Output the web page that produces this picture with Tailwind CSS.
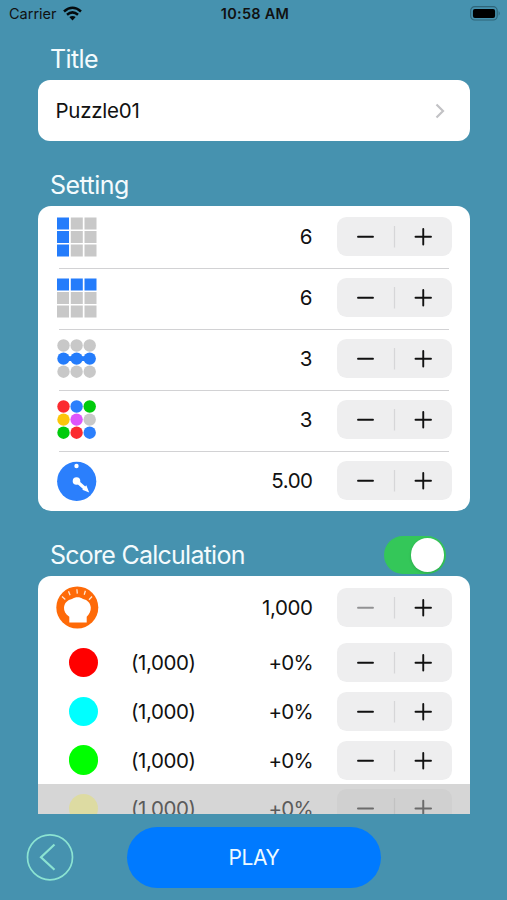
<!DOCTYPE html>
<html lang="en">
<head>
<meta charset="utf-8">
<title>Puzzle settings</title>
<script src="https://cdn.jsdelivr.net/npm/@tailwindcss/browser@4"></script>
</head>
<body class="bg-[#4692af]">
<svg class="hidden">
  <symbol id="stepper" viewBox="0 0 115 39">
    <rect width="115" height="39" rx="9.5" fill="#eeeeef"/>
    <path d="M57.5 9v21.5" stroke="#d6d6d8" stroke-width="1.2"/>
    <path d="M78.5 19.7h15.500M86.250 11.9v15.600" stroke="#111" stroke-width="1.9" stroke-linecap="round"/>
    <path d="M21 19.7h15" stroke="currentColor" stroke-width="1.9" stroke-linecap="round"/>
  </symbol>
</svg>
<div class="w-[507px] h-[900px] overflow-hidden flex flex-col bg-[#4692af] text-[#111] font-['Inter',sans-serif]">
  <header class="h-7 shrink-0 grid grid-cols-3 items-center pl-[9px] pr-[6px]">
    <div class="flex items-center gap-[6px]">
      <span class="text-[14.5px] leading-none tracking-[0px]">Carrier</span>
      <svg class="w-[19px] h-[15px] -mt-[2px]" viewBox="0 0 19 15" fill="none" stroke="#050b0d" stroke-width="2.5"><path d="M1 5.500Q9.500-2 18 5.500M4 8.800Q9.500 4 15 8.800"/><path d="M6.300 11.100Q9.500 8.700 12.700 11.100L9.500 14.500Z" fill="#050b0d" stroke="none"/></svg>
    </div>
    <div class="text-center text-[14.5px] leading-none font-semibold tracking-[0.25px] whitespace-nowrap">10:58 AM</div>
    <svg class="justify-self-end w-[31px] h-[15px] -mt-[2px]" viewBox="0 0 31 15"><rect x=".7" y=".7" width="26.5" height="13.3" rx="4" fill="none" stroke="#2f6579" stroke-width="1.2"/><rect x="2.900" y="2.900" width="22.2" height="9" rx="2" fill="#000"/><path d="M28.700 5v4.800q2-2.400 0-4.800" fill="#2f6579"/></svg>
  </header>
  <main class="h-[786px] shrink-0 mx-[37.5px] flex flex-col overflow-hidden">
    <h2 class="h-[52px] shrink-0 pl-[12.5px] pt-[16px] text-[25px] leading-[31px] tracking-[-0.6px] text-[#f4fbfd]">Title</h2>
    <section class="h-[61px] shrink-0 rounded-[12px] bg-white flex items-center justify-between pl-[18px] pr-[24px]">
      <span class="pt-[2px] text-[20.5px] tracking-[-0.25px]">Puzzle01</span>
      <svg class="w-[12px] h-[16px]" viewBox="0 0 12 16" fill="none" stroke="#c2c2c5" stroke-width="2.2"><path d="M2.500 1.500l6.500 6.500-6.500 6.500"/></svg>
    </section>
    <h2 class="h-[65px] shrink-0 pl-[12.5px] pt-[29px] text-[25px] leading-[31px] tracking-[-0.55px] text-[#f4fbfd]">Setting</h2>
    <section class="shrink-0 rounded-[13px] bg-white text-[20.5px]">
      <div class="h-[61px] relative flex items-center pl-[19.5px] pr-[18px]">
        <svg class="w-[40px] h-[40px]" viewBox="0 0 40 40"><path fill="#247cfb" d="M0 .5h12v12H0zM0 14h12v12H0zM0 27.500h12v12H0z"/><path fill="#c8c8c8" d="M13.800.5h12v12h-12zM27.500.5h12v12h-12zM13.800 14h12v12h-12zM27.500 14h12v12h-12zM13.800 27.500h12v12h-12zM27.500 27.500h12v12h-12z"/></svg>
        <span class="ml-auto mr-[24px] pt-[2px]">6</span>
        <svg class="w-[115px] h-[39px]"><use href="#stepper"/></svg>
        <i class="absolute left-[21px] right-[21px] bottom-[-2px] h-[1.5px] bg-[#d2d2d4]"></i>
      </div>
      <div class="h-[61px] relative flex items-center pl-[19.5px] pr-[18px]">
        <svg class="w-[40px] h-[40px]" viewBox="0 0 40 40"><path fill="#247cfb" d="M0 .5h12v12H0zM13.800.5h12v12h-12zM27.500.5h12v12h-12z"/><path fill="#c8c8c8" d="M0 14h12v12H0zM0 27.500h12v12H0zM13.800 14h12v12h-12zM27.500 14h12v12h-12zM13.800 27.500h12v12h-12zM27.500 27.500h12v12h-12z"/></svg>
        <span class="ml-auto mr-[24px] pt-[2px]">6</span>
        <svg class="w-[115px] h-[39px]"><use href="#stepper"/></svg>
        <i class="absolute left-[21px] right-[21px] bottom-[-2px] h-[1.5px] bg-[#d2d2d4]"></i>
      </div>
      <div class="h-[61px] relative flex items-center pl-[19.5px] pr-[18px]">
        <svg class="w-[40px] h-[40px]" viewBox="0 0 40 40"><g fill="#c8c8c8"><circle cx="6.500" cy="6.500" r="6.200"/><circle cx="19.600" cy="6.500" r="6.200"/><circle cx="32.700" cy="6.500" r="6.200"/><circle cx="6.500" cy="32.700" r="6.200"/><circle cx="19.600" cy="32.700" r="6.200"/><circle cx="32.700" cy="32.700" r="6.200"/></g><g fill="#247cfb"><circle cx="6.500" cy="19.600" r="6.200"/><circle cx="19.600" cy="19.600" r="6.200"/><circle cx="32.700" cy="19.600" r="6.200"/><path d="M6 17.200h27v4.800H6z"/></g></svg>
        <span class="ml-auto mr-[24px] pt-[2px]">3</span>
        <svg class="w-[115px] h-[39px]"><use href="#stepper"/></svg>
        <i class="absolute left-[21px] right-[21px] bottom-[-2px] h-[1.5px] bg-[#d2d2d4]"></i>
      </div>
      <div class="h-[61px] relative flex items-center pl-[19.5px] pr-[18px]">
        <svg class="w-[40px] h-[40px]" viewBox="0 0 40 40"><circle cx="6.500" cy="6.500" r="6.200" fill="#fb2b2f"/><circle cx="19.600" cy="6.500" r="6.200" fill="#2b7ffc"/><circle cx="32.700" cy="6.500" r="6.200" fill="#00cb0c"/><circle cx="6.500" cy="19.600" r="6.200" fill="#fdc60a"/><circle cx="19.600" cy="19.600" r="6.200" fill="#dd55fb"/><circle cx="32.700" cy="19.600" r="6.200" fill="#c8c8c8"/><circle cx="6.500" cy="32.700" r="6.200" fill="#00cb0c"/><circle cx="19.600" cy="32.700" r="6.200" fill="#fb2b2f"/><circle cx="32.700" cy="32.700" r="6.200" fill="#2b7ffc"/></svg>
        <span class="ml-auto mr-[24px] pt-[2px]">3</span>
        <svg class="w-[115px] h-[39px]"><use href="#stepper"/></svg>
        <i class="absolute left-[21px] right-[21px] bottom-[-2px] h-[1.5px] bg-[#d2d2d4]"></i>
      </div>
      <div class="h-[61px] relative flex items-center pl-[19.5px] pr-[18px]">
        <svg class="w-[40px] h-[40px]" viewBox="0 0 40 40"><circle cx="19.700" cy="20.300" r="19.600" fill="#2b7ffc"/><circle cx="19.500" cy="5" r="2.200" fill="#fff"/><circle cx="19.500" cy="20" r="3.800" fill="#fff"/><path d="M19.500 20l8.500 7.500" stroke="#fff" stroke-width="3.400"/><path d="M25.300 28.700l4-4.500 2.900 7.300z" fill="#fff"/></svg>
        <span class="ml-auto mr-[24px] pt-[2px] tracking-[-0.5px]">5.00</span>
        <svg class="w-[115px] h-[39px]"><use href="#stepper"/></svg>
      </div>
    </section>
    <div class="h-[65px] shrink-0 flex items-start justify-between pl-[12.5px] pr-[23.5px]">
      <h2 class="pt-[29px] text-[25px] leading-[31px] tracking-[-0.75px] text-[#f4fbfd]">Score Calculation</h2>
      <div class="mt-[25px] w-[62px] h-[38px] rounded-full bg-[#34c759] flex items-center justify-end pr-[2px]"><div class="size-[33.5px] rounded-full bg-white shadow-[0_1px_3px_rgba(0,0,0,0.15)]"></div></div>
    </div>
    <section class="shrink-0 rounded-t-[13px] bg-white text-[20.5px] tracking-[-0.4px]">
      <div class="h-[62px] flex items-center pl-[18px] pr-[18px]">
        <svg class="w-[43px] h-[43px]" viewBox="0 0 43 43"><circle cx="21.300" cy="21.500" r="21" fill="#fe6a08"/><path d="M13.300 36.500V30.800C9.500 28.500 7.800 25 8 21.500c.3-4.500 3.500-7.500 8-8.500 3.300-2.200 8-2.200 11 0 4.500 1 7.500 4 7.800 8.500.2 3.500-1.500 7-4.100 9.300v5.700z" fill="#fff"/><path d="M6 10.500l3.300 3M12.500 5.300l1.600 4M20.900 3.300l.4 4.300M29.400 4.800l-1.200 4M36 10.500l-3 3.200" stroke="#ffe6d2" stroke-width="1.300"/></svg>
        <span class="ml-auto mr-[24px] pt-[2px]">1,000</span>
        <svg class="w-[115px] h-[39px] text-[#929294]"><use href="#stepper"/></svg>
      </div>
      <div class="h-[49px] flex items-center pl-[31px] pr-[18px]">
        <div class="size-[29.5px] rounded-full bg-[#ff0000]"></div><span class="ml-[33px] pt-px">(1,000)</span><span class="ml-auto mr-[23.5px] pt-px tracking-[-0.7px]">+0%</span>
        <svg class="w-[115px] h-[39px]"><use href="#stepper"/></svg>
      </div>
      <div class="h-[49px] flex items-center pl-[31px] pr-[18px]">
        <div class="size-[29.5px] rounded-full bg-[#00ffff]"></div><span class="ml-[33px] pt-px">(1,000)</span><span class="ml-auto mr-[23.5px] pt-px tracking-[-0.7px]">+0%</span>
        <svg class="w-[115px] h-[39px]"><use href="#stepper"/></svg>
      </div>
      <div class="h-[48px] flex items-center pl-[31px] pr-[18px]">
        <div class="size-[29.5px] rounded-full bg-[#00ff00]"></div><span class="ml-[33px] pt-[2px]">(1,000)</span><span class="ml-auto mr-[23.5px] pt-[2px] tracking-[-0.7px]">+0%</span>
        <svg class="w-[115px] h-[39px]"><use href="#stepper"/></svg>
      </div>
      <div class="h-[49px] bg-[#d6d6d6] flex items-center pl-[31px] pr-[18px]">
        <div class="size-[29.5px] rounded-full bg-[#dddba2]"></div><span class="ml-[33px] pt-[2px] text-[#5b5b5b]">(1,000)</span><span class="ml-auto mr-[23.5px] pt-[2px] tracking-[-0.7px] text-[#5b5b5b]">+0%</span>
        <svg class="w-[115px] h-[39px]" viewBox="0 0 115 39"><rect width="115" height="39" rx="9.5" fill="#d0d0d0"/><path d="M57.500 9v21.500" stroke="#c2c2c2" stroke-width="1.2"/><path d="M21 19.500h15M78.500 19.500h15.500M86.250 11.700v15.600" stroke="#6b6b6b" stroke-width="2" stroke-linecap="round"/></svg>
      </div>
    </section>
  </main>
  <footer class="h-[86px] shrink-0 flex items-center pl-[26px]">
    <svg class="w-[48px] h-[48px]" viewBox="0 0 48 48" fill="none" stroke="#8be3d2"><circle cx="24" cy="24.300" r="22.500" stroke-width="1.7"/><path d="M28.500 11.500L15 24.300l13.500 12.500" stroke-width="2.2"/></svg>
    <button class="ml-[53px] w-[254px] h-[61px] rounded-full bg-[#007aff] text-[#eefaff] text-[21px] tracking-[-0.4px] pt-px">PLAY</button>
  </footer>
</div>
</body>
</html>
